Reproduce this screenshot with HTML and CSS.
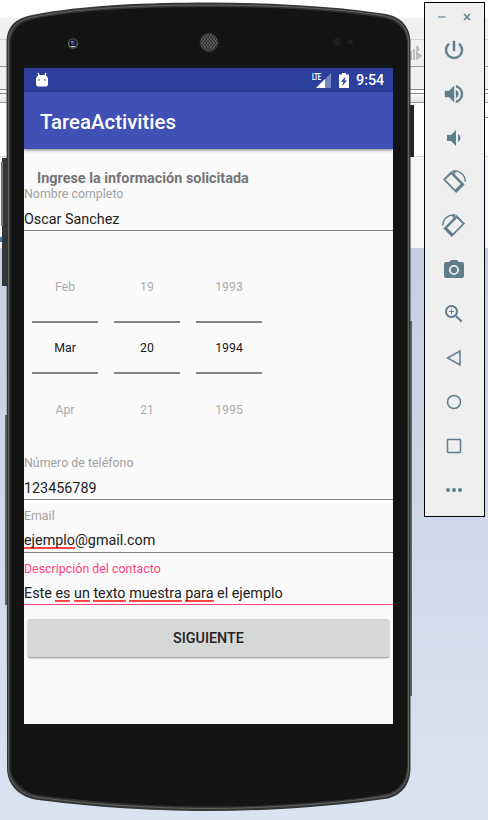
FILE: index.html
```
<!DOCTYPE html>
<html lang="es">
<head>
<meta charset="utf-8">
<title>TareaActivities</title>
<link rel="stylesheet" href="styles.css">
</head>
<body>
<div class="desktop">
  <svg class="backdrop" width="488" height="820" viewBox="0 0 488 820" shape-rendering="crispEdges">
    <defs>
      <linearGradient id="sky" x1="0" y1="0" x2="0" y2="1"><stop offset="0" stop-color="#c5cfe2"/><stop offset="1" stop-color="#dae3f1"/></linearGradient>
      <linearGradient id="strip" x1="0" y1="0" x2="0" y2="1"><stop offset="0" stop-color="#fafafa"/><stop offset="1" stop-color="#e5e5e5"/></linearGradient>
    </defs>
    <rect width="488" height="820" fill="#fff"/>
    <rect y="18" width="488" height="71" fill="#f0f0f0"/>
    <rect y="39" width="488" height="1" fill="#d2d2d2"/>
    <rect y="66" width="488" height="1" fill="#999"/>
    <rect y="89" width="488" height="1" fill="#888"/>
    <rect y="90" width="488" height="3" fill="#fff"/>
    <rect y="93" width="488" height="1" fill="#888"/>
    <rect y="94" width="488" height="8" fill="url(#strip)"/>
    <rect y="102" width="488" height="1" fill="#999"/>
    <rect x="484" y="117" width="4" height="1" fill="#888"/>
    <rect y="156" width="488" height="92" fill="#f4f5f8"/>
    <rect y="156" width="488" height="1" fill="#d8d9dc"/>
    <rect y="248" width="488" height="572" fill="url(#sky)"/>
    <rect y="237" width="3" height="5" fill="#3f78a5"/>
    <g fill="#bcbcbc"><rect x="410" y="51" width="2" height="9"/><rect x="413" y="49" width="2" height="11"/><rect x="416" y="46" width="3" height="5"/><path d="M416 51v9l7-4z"/></g>
  </svg>

  <main class="phone">
    <svg class="shell" width="415" height="812" viewBox="0 0 415 812">
      <rect x="2" y="158" width="7" height="128" fill="#353535"/>
      <rect x="1" y="162" width="2" height="64" fill="#777"/>
      <rect x="410" y="105" width="4" height="52" fill="#242424"/>
      <path d="M5 415h3v190H5zM410 321h2v375h-2z" fill="#666"/>
      <path class="rim" d="M6.500 42C6.500 27 15 18 32 15C82 5 148 2.500 209 2.500C270 2.500 336 6 386 14C402 17 410.500 28 410.500 42V768C410.500 784 402 795 388 798.500C338 806 270 811 208 811C148 811 82 806 35 799.500C18 796 7 784 7 768Z"/>
      <path class="rim-line" d="M8.500 42C8.500 29 17 20 33 17C82 7.500 148 5 209 5C270 5 336 8 385 16C400 19 408.500 29 408.500 42V768C408.500 782 400 793 387 796C338 803.500 270 808.500 208 808.500C148 808.500 82 803.500 36 797C20 794 8.500 782 8.500 768Z"/>
      <path fill="#141414" d="M10.500 44C10.500 31 19 22 34 19C82 9.500 148 7 209 7C270 7 336 10 384 18C399 21 407 31 407 44V766C407 780 399 791 386 794C338 802 270 806.500 208 806.500C148 806.500 82 801 37 795C21 791 10.500 780 10.500 766Z"/>
      <circle cx="73" cy="43.500" r="5.200" fill="#55575a"/><circle cx="73" cy="43" r="3.700" fill="#18181f"/><circle cx="73" cy="42.800" r="2.100" fill="#393a91"/><circle cx="72" cy="41.800" r=".8" fill="#b7b9dc"/><path d="M71 46.500h4" stroke="#bbb" stroke-width="1"/>
      <defs><pattern id="mesh" width="3" height="4" patternUnits="userSpaceOnUse"><rect width="3" height="4" fill="#5c5c5c"/><circle cx="1" cy="1" r=".85" fill="#151515"/><circle cx="2.500" cy="3" r=".85" fill="#151515"/></pattern></defs>
      <circle cx="209" cy="42.500" r="9" fill="url(#mesh)" stroke="#343434"/>
      <circle cx="337" cy="42" r="4" fill="#1e1e1e"/><circle cx="350.500" cy="42" r="2.500" fill="#202020"/>
    </svg>

    <section class="screen">
      <header class="status">
        <svg class="droid" width="14" height="16" viewBox="0 0 14 16"><path d="M3 1l1.500 3M11 1L9.500 4" stroke="#fff" stroke-width="1.200"/><path d="M1.500 5L3.500 3h7l2 2 .5 2v5q0 2.500-2.500 2.500h-7Q1 14.500 1 12V7z" fill="#fff"/><circle cx="4" cy="8" r=".9" fill="#7f8bc5"/><circle cx="10" cy="8" r=".9" fill="#7f8bc5"/></svg>
        <span class="network"><span class="lte">LTE</span><svg width="15" height="15" viewBox="0 0 15 15"><path d="M0 15L15 0v15z" fill="#7883c1"/><path d="M0 15l9-9v9z" fill="#fff"/></svg></span>
        <svg class="battery" width="10" height="15" viewBox="0 0 10 15"><path d="M3 0h4v1.500h3V15H0V1.500h3z" fill="#fff"/><path d="M6.700 3.500L2 8.700h2.500L3.300 12.800 8 7.500H5.500z" fill="#2c3f9d"/></svg>
        <span class="clock">9:54</span>
      </header>
      <div class="appbar"><h1>TareaActivities</h1></div>
      <form class="content">
        <h2>Ingrese la información solicitada</h2>
        <div class="field name"><label>Nombre completo</label><div class="value"><span>Oscar Sanchez</span></div></div>
        <div class="picker">
          <div class="wheel"><span>Feb</span><b>Mar</b><span>Apr</span></div>
          <div class="wheel"><span>19</span><b>20</b><span>21</span></div>
          <div class="wheel"><span>1993</span><b>1994</b><span>1995</span></div>
        </div>
        <div class="field tel"><label>Número de teléfono</label><div class="value"><span>123456789</span></div></div>
        <div class="field email"><label>Email</label><div class="value"><span><u>ejemplo</u>@gmail.com</span></div></div>
        <div class="field focused"><label>Descripción del contacto</label><div class="value"><span>Este <u>es</u> <u>un</u> <u>texto</u> <u>muestra</u> <u>para</u> el ejemplo</span></div></div>
        <button type="button">SIGUIENTE</button>
      </form>
    </section>
  </main>

  <aside class="tools">
    <div class="window"><svg width="8" height="8" viewBox="0 0 8 8"><path d="M0 4h7.500" stroke="#9cb0ba" stroke-width="2"/></svg><svg width="8" height="8" viewBox="0 0 8 8"><path d="M1 1l6 6M7 1L1 7" stroke="#607d8b" stroke-width="1.500"/></svg></div>
    <svg class="tool" viewBox="0 0 24 24"><path stroke="#607d8b" stroke-width=".5" d="M13 3h-2v10h2zM17.830 5.170l-1.420 1.420A6.920 6.920 0 0 1 19 12a7 7 0 1 1-11.420-5.420L6.170 5.170A8.930 8.930 0 0 0 3 12a9 9 0 0 0 18 0c0-2.740-1.230-5.180-3.170-6.830z"/></svg>
    <svg class="tool" viewBox="0 0 24 24"><path stroke="#607d8b" stroke-width=".4" d="M3 9v6h4l5 5V4L7 9zm13.500 3A4.500 4.500 0 0 0 14 7.970v8.050A4.470 4.470 0 0 0 16.500 12zM14 3.230v2.060a7 7 0 0 1 0 13.420v2.060a9 9 0 0 0 0-17.540z"/></svg>
    <svg class="tool" viewBox="0 0 24 24"><path d="M18.500 12A4.500 4.500 0 0 0 16 7.970v8.050A4.470 4.470 0 0 0 18.500 12zM5 9v6h4l5 5V4L9 9z"/></svg>
    <svg class="tool rotate" viewBox="0 0 24 24"><path fill-rule="evenodd" d="M1 9.400L9.400 1 22.600 14.600 14.200 23zM3.500 9.800L13.200 19.500 18.800 14 9.200 4.200z"/><path d="M11 1.200C18 .2 23 5 23.300 11.700" class="line"/><path d="M10 .8l5-.1-2.500 3.200z"/></svg>
    <svg class="tool rotate flip" viewBox="0 0 24 24"><path fill-rule="evenodd" d="M1 9.400L9.400 1 22.600 14.600 14.200 23zM3.500 9.800L13.200 19.500 18.800 14 9.200 4.200z"/><path d="M11 1.200C18 .2 23 5 23.300 11.700" class="line"/><path d="M10 .8l5-.1-2.500 3.200z"/></svg>
    <svg class="tool" viewBox="0 0 24 24"><circle cx="12" cy="12" r="3.200"/><path fill-rule="evenodd" d="M9 2L7.170 4H4a2 2 0 0 0-2 2v12a2 2 0 0 0 2 2h16a2 2 0 0 0 2-2V6a2 2 0 0 0-2-2h-3.170L15 2zm3 15a5 5 0 1 1 0-10 5 5 0 0 1 0 10z"/></svg>
    <svg class="tool" viewBox="0 0 24 24"><path d="M15.500 14h-.79l-.28-.27A6.500 6.500 0 1 0 13.730 14.430l.27.28v.79l5 4.990L20.490 19zM9.500 14a4.500 4.500 0 1 1 0-9 4.500 4.500 0 0 1 0 9zM12 10h-2v2H9v-2H7V9h2V7h1v2h2z"/></svg>
    <svg class="tool nav" viewBox="0 0 24 24"><path d="M18 5v14L5.500 12z"/></svg>
    <svg class="tool nav" viewBox="0 0 24 24"><circle cx="12" cy="12" r="6.500"/></svg>
    <svg class="tool nav" viewBox="0 0 24 24"><rect x="5.500" y="5.500" width="13" height="13" rx=".7"/></svg>
    <svg class="tool" viewBox="0 0 24 24"><circle cx="6" cy="12" r="2"/><circle cx="12" cy="12" r="2"/><circle cx="18" cy="12" r="2"/></svg>
  </aside>
</div>
</body>
</html>
```

FILE: styles.css
```
* { box-sizing: border-box; }
body { margin: 0; font-family: Roboto, "Liberation Sans", sans-serif; }
.desktop { position: relative; width: 488px; height: 820px; overflow: hidden; display: flex; align-items: flex-start; }
.backdrop { position: absolute; inset: 0; }
.phone { position: relative; width: 424px; flex: none; padding: 68px 31px 96px 24px; }
.shell { position: absolute; left: 0; top: 0; }
.rim { fill: #343636; }
.rim-line { fill: none; stroke: #626464; stroke-width: 1; }
.screen { position: relative; width: 369px; height: 656px; background: #fafafa; overflow: hidden; }
.status { height: 24px; background: #2c3f9d; color: #fff; display: flex; align-items: center; padding: 0 8px 0 11px; }
.droid { margin-top: -1px; }
.network { position: relative; margin-left: auto; width: 19px; height: 15px; display: flex; justify-content: flex-end; }
.lte { position: absolute; left: 0; top: 0; font-size: 9.500px; line-height: 8px; font-weight: 700; letter-spacing: -.3px; transform: scaleX(.62); transform-origin: left; }
.network svg { display: block; }
.battery { margin-left: 8px; }
.clock { margin-left: 7px; width: 29px; font-size: 14.350px; font-weight: 500; white-space: nowrap; }
.appbar { position: relative; height: 57px; background: #4050b5; color: #fff; display: flex; align-items: center; padding: 2px 0 0 16px; box-shadow: 0 1px 3px rgba(0,0,0,.5); }
h1 { margin: 0; font-size: 20.400px; font-weight: 500; line-height: 24px; }
.content { display: flex; flex-direction: column; padding-top: 21px; color: #212121; }
h2 { margin: 0 0 0 13px; font-size: 14.400px; font-weight: 700; line-height: 17px; color: #757575; }
.field { display: flex; flex-direction: column; height: 52.500px; border-bottom: 1.500px solid #858585; flex: none; }
.field label { font-size: 12.300px; line-height: 14px; color: #a0a0a0; letter-spacing: .05px; }
.value { font-size: 14.350px; line-height: 17px; margin-top: 10px; white-space: pre; }
.name { height: 44px; }
.picker { display: flex; gap: 16px; padding-left: 8px; height: 225px; font-size: 12.300px; }
.wheel { width: 66px; display: flex; flex-direction: column; padding-top: 46px; text-align: center; line-height: 20px; color: #aaa; }
.wheel b { margin: 24px 0 26px; height: 53px; border-top: 2px solid #848484; border-bottom: 2px solid #848484; line-height: 51px; font-weight: 400; color: #212121; }
.tel { height: 44px; }
.email { padding-top: 9px; }
.focused { padding-top: 9px; border-color: #ff4081; }
.email .value, .focused .value { margin-top: 9px; }
.focused label { color: #ff4081; }
u { text-decoration: none; background: linear-gradient(#ff4444, #ff4444) left bottom / 100% 2px no-repeat; }
button { margin: 14px 4px 0; height: 38px; border: 0; border-radius: 2px; background: #d6d8d7; box-shadow: 0 1px 2px rgba(0,0,0,.45); font: 500 14.350px Roboto, sans-serif; color: #212121; }
.tools { position: relative; width: 61px; height: 515px; margin-top: 2px; background: #efefef; border: 1px solid #000; display: flex; flex-direction: column; align-items: center; padding-right: 1px; }
.window { display: flex; gap: 17px; height: 35px; padding-top: 10px; flex: none; margin-left: 1px; }
.tool { display: block; flex: none; width: 24px; height: 24px; margin-bottom: 20px; fill: #607d8b; }
.line { fill: none; stroke: #607d8b; stroke-width: 1.400; }
.flip { transform: scaleX(-1); }
.nav { fill: none; stroke: #607d8b; stroke-width: 1.500; }
```
